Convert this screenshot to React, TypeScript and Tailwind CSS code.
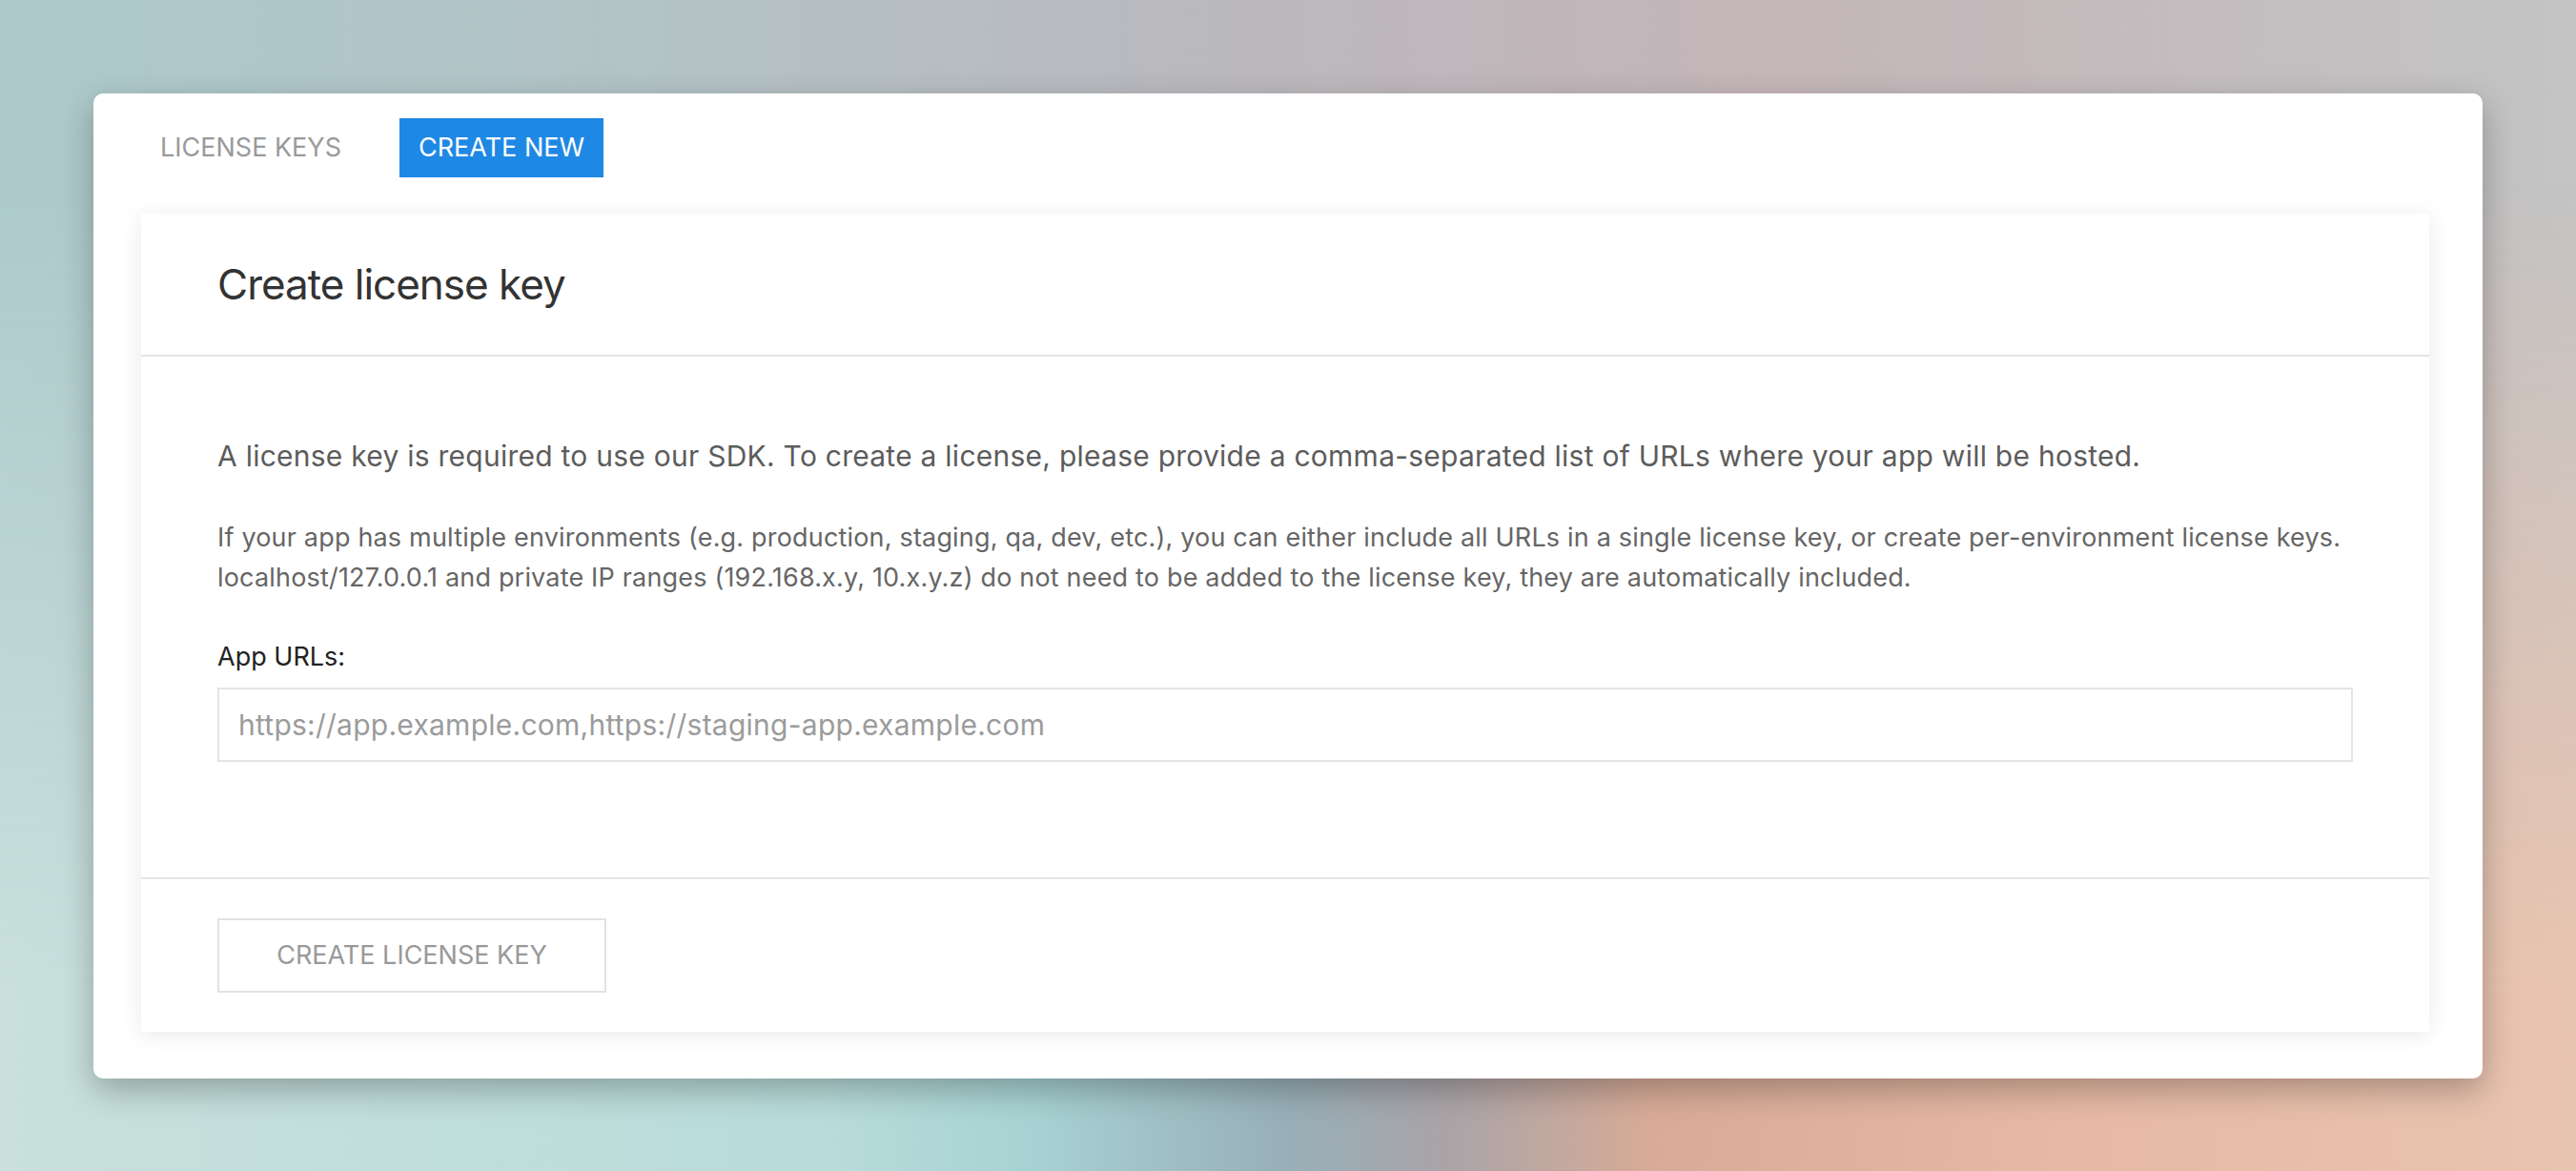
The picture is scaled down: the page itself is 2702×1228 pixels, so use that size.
import { useState } from 'react';

const font = "font-['Inter','Liberation_Sans',Arial,sans-serif]";

export default function App() {
   const [tab, setTab] = useState<'keys' | 'new'>('new');
   const [urls, setUrls] = useState('');

   return (
      <div className={`relative min-h-screen w-full overflow-hidden p-[98px] ${font} bg-[linear-gradient(90deg,#adcacb_0%,#b3c3c6_25%,#b9b9be_45%,#c4b5b8_68%,#c3c4c4_100%)]`}>
         {/* bottom tint of the backdrop */}
         <div className="pointer-events-none absolute inset-0 bg-[linear-gradient(90deg,#c9e0dc_0%,#b8dcda_32%,#a7d2d3_40%,#98afb8_50%,#a9a4a8_56%,#d7ab97_64%,#e6b9a4_80%,#e9c4b0_100%)] [mask-image:linear-gradient(to_bottom,transparent_15%,black_85%)]" />

         <div className="relative flex flex-col rounded-[10px] bg-white pb-[49px] pl-[50px] pr-[56px] pt-[26px] shadow-[0_12px_34px_rgba(0,0,0,0.28)]">
            {/* Tabs */}
            <div className="flex gap-[41px]">
               <button
                  onClick={() => setTab('keys')}
                  className={`h-[62px] px-[20px] text-[27px] uppercase ${tab === 'keys' ? 'bg-[#1e88e5] text-white' : 'text-[#9a9a9a]'}`}
               >
                  License Keys
               </button>
               <button
                  onClick={() => setTab('new')}
                  className={`h-[62px] px-[20px] text-[27px] uppercase ${tab === 'new' ? 'bg-[#1e88e5] text-white' : 'text-[#9a9a9a]'}`}
               >
                  Create New
               </button>
            </div>

            {/* Form card */}
            <div className="mt-[38px] flex flex-col bg-white shadow-[0_3px_22px_rgba(0,0,0,0.09)]">
               <div className="flex h-[150px] items-center border-b-2 border-[#e6e6e6] px-[80px]">
                  <h1 className="text-[44px] tracking-[-1px] text-[#333]">Create license key</h1>
               </div>

               <div className="flex flex-col border-b-2 border-[#e6e6e6] px-[80px] pb-[121px] pt-[82px]">
                  <p className="text-[30px] leading-[45px] tracking-[0.25px] text-[#5c5c5c]">
                     A license key is required to use our SDK. To create a license, please provide a comma-separated list of URLs where your app will be hosted.
                  </p>
                  <p className="mt-[42px] text-[27px] leading-[42px] tracking-[0.18px] text-[#666]">
                     If your app has multiple environments (e.g. production, staging, qa, dev, etc.), you can either include all URLs in a single license key, or create per-environment license keys.
                     <br />
                     localhost/127.0.0.1 and private IP ranges (192.168.x.y, 10.x.y.z) do not need to be added to the license key, they are automatically included.
                  </p>
                  <label className="mt-[42px] text-[27px] leading-[40px] text-[#222]">App URLs:</label>
                  <input
                     value={urls}
                     onChange={(e) => setUrls(e.target.value)}
                     placeholder="https://app.example.com,https://staging-app.example.com"
                     className="mt-[12px] h-[78px] w-full border-2 border-[#e4e4e4] px-[20px] text-[30px] tracking-[0.25px] text-[#333] outline-none placeholder:text-[#9b9b9b]"
                  />
               </div>

               <div className="flex px-[80px] pb-[41px] pt-[41px]">
                  <button disabled={!urls} className="h-[78px] w-[408px] border-2 border-[#e2e2e2] text-[27px] uppercase text-[#999]">
                     Create License Key
                  </button>
               </div>
            </div>
         </div>
      </div>
   );
}
